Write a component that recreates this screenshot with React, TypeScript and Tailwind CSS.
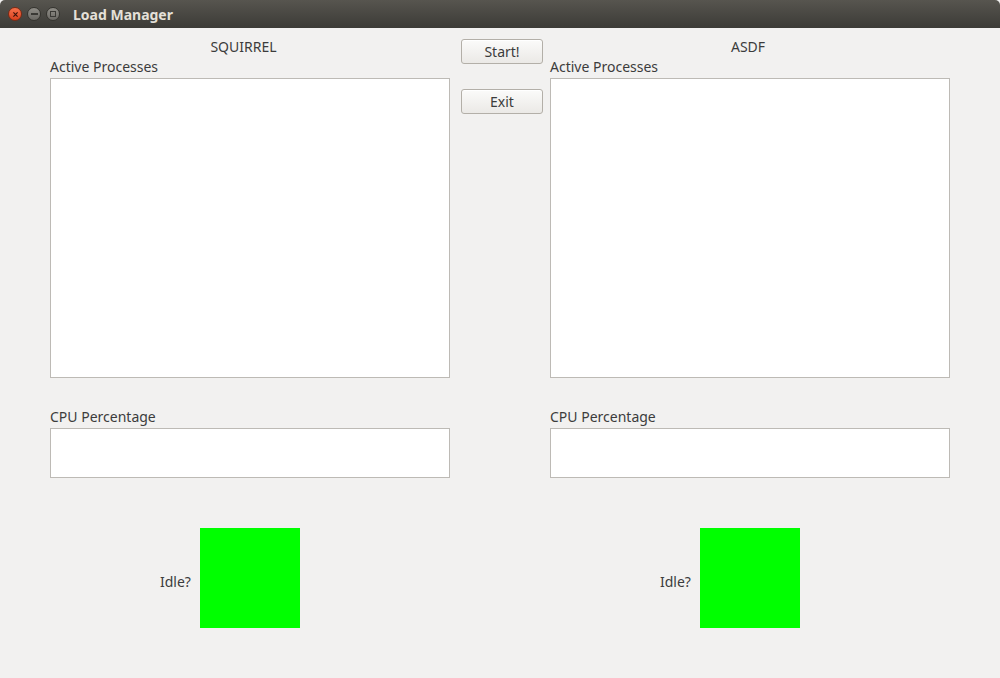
import React from 'react'

const font = { fontFamily: '"Noto Sans", "Open Sans", sans-serif' }

function Panel({ title, titleClass }: { title: string; titleClass: string }) {
  return (
    <div className="flex w-[400px] flex-col text-[14px] leading-[16px] text-[#3c3c3c]">
      <div className={'mt-[11px] text-center ' + titleClass}>{title}</div>
      <div className="mt-[4px]">Active Processes</div>
      <div className="mt-[3px] h-[300px] border border-[#bdbab5] bg-white" />
      <div className="mt-[31px]">CPU Percentage</div>
      <div className="mt-[3px] h-[50px] border border-[#bdbab5] bg-white" />
      <div className="mt-[50px] flex items-center pl-[110px]">
        <span className="mr-[9px] pt-[8px]">Idle?</span>
        <div className="h-[100px] w-[100px] bg-[#00ff00]" />
      </div>
    </div>
  )
}

function WinButton({ label, className }: { label: string; className?: string }) {
  return (
    <button
      className={
        'h-[25px] w-[82px] rounded-[3px] border border-[#b3afa8] bg-gradient-to-b from-[#fbfbfa] to-[#ebe9e6] text-[14px] leading-[16px] text-[#3c3c3c] shadow-[inset_0_1px_0_#ffffff] ' +
        (className ?? '')
      }
    >
      {label}
    </button>
  )
}

export default function App() {
  return (
    <div className="flex h-[678px] w-[1000px] flex-col overflow-hidden bg-[#f2f1f0]" style={font}>
      {/* title bar */}
      <div className="flex h-[28px] items-center rounded-t-[5px] bg-gradient-to-b from-[#57554f] to-[#3c3b37] pl-[8px]">
        <div className="flex h-[14px] w-[14px] items-center justify-center rounded-full bg-gradient-to-b from-[#f7714b] to-[#d9401c] border border-[#7d2a14]">
          <svg viewBox="0 0 10 10" className="h-[7px] w-[7px]">
            <path d="M2 2L8 8M8 2L2 8" stroke="#3a120a" strokeWidth="1.6" />
          </svg>
        </div>
        <div className="ml-[5px] flex h-[14px] w-[14px] items-center justify-center rounded-full bg-gradient-to-b from-[#8f8d87] to-[#6b6964] border border-[#35342f]">
          <div className="h-[2px] w-[7px] bg-[#3a3935]" />
        </div>
        <div className="ml-[5px] flex h-[14px] w-[14px] items-center justify-center rounded-full bg-gradient-to-b from-[#8f8d87] to-[#6b6964] border border-[#35342f]">
          <div className="h-[6px] w-[6px] border border-[#3a3935]" />
        </div>
        <span className="ml-[13px] text-[14px] font-bold text-[#e4e0d8]">
          Load Manager
        </span>
      </div>

      {/* content */}
      <div className="flex pl-[50px]">
        <Panel title="SQUIRREL" titleClass="pr-[13px]" />
        <div className="ml-[11px] mr-[7px] flex flex-col">
          <WinButton label="Start!" className="mt-[11px]" />
          <WinButton label="Exit" className="mt-[25px]" />
        </div>
        <Panel title="ASDF" titleClass="pr-[4px]" />
      </div>
    </div>
  )
}
